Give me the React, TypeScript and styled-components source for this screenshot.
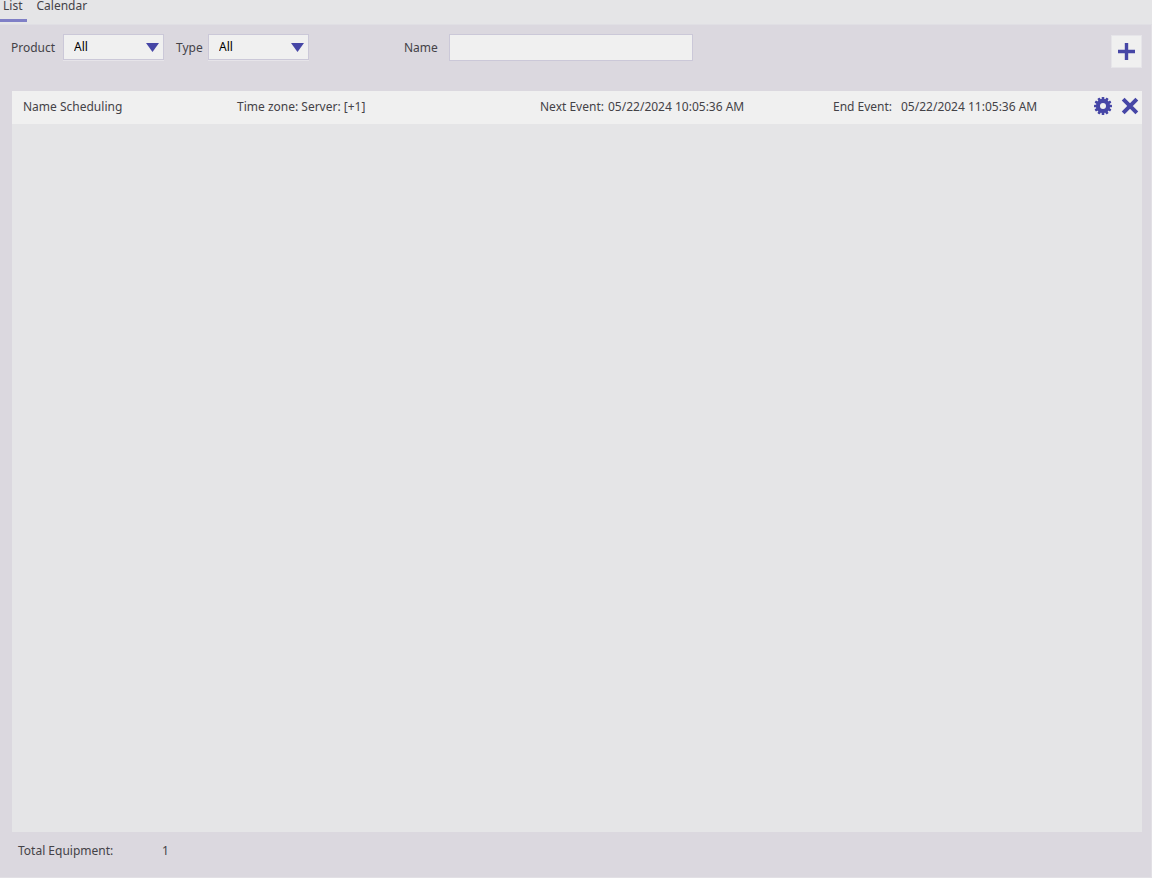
import React, { useState } from "react";
import styled, { createGlobalStyle } from "styled-components";

const ink = "#444247";
const accent = "#4646a6";
const surface = "#f0f0f0";

const GlobalStyle = createGlobalStyle`
  *, *::before, *::after { box-sizing: border-box; }
  body {
    margin: 0;
    background: #e5e5e7;
    color: ${ink};
    font-family: "Noto Sans", "Open Sans", sans-serif;
    font-size: 12px;
    line-height: 16px;
  }
  button, input, select { font: inherit; color: inherit; }
`;

const Page = styled.div`
  display: flex;
  flex-direction: column;
  min-height: 100vh;
`;

const Tabs = styled.nav`
  display: flex;
  gap: 6px;
  height: 25px;
  border-bottom: 1px solid #e0dfe4;
`;

const Tab = styled.button<{ $active: boolean }>`
  display: flex;
  align-items: flex-start;
  height: 22px;
  padding: 0 5px 0 3px;
  border: 0;
  border-bottom: 3px solid ${(p) => (p.$active ? "#7f7fc6" : "transparent")};
  background: none;
  line-height: 12px;
  cursor: pointer;
`;

const Panel = styled.main`
  flex: 1;
  display: flex;
  flex-direction: column;
  padding: 9px 9px 0 11px;
  background: #dbd8df;
  border-right: 1px solid #e2e0e5;
  border-bottom: 1px solid #e2e0e5;
`;

const FilterBar = styled.form`
  display: flex;
  align-items: flex-start;
  height: 57px;
`;

const Field = styled.div<{ $labelWidth: number; $after: number }>`
  display: grid;
  grid-template-columns: ${(p) => p.$labelWidth}px auto;
  align-items: center;
  margin-right: ${(p) => p.$after}px;
`;

const SelectBox = styled.div`
  position: relative;
  width: 101px;
  height: 27px;
  border-bottom: 1px solid #e6e4e9;
`;

const Select = styled.select`
  appearance: none;
  display: block;
  width: 100%;
  height: 26px;
  padding: 0 24px 0 10px;
  border: 1px solid #cbc8d8;
  border-radius: 0;
  background: ${surface};
  color: #000;
`;

const Arrow = styled.svg`
  position: absolute;
  top: 9px;
  right: 5px;
  width: 13px;
  height: 9px;
  fill: ${accent};
  pointer-events: none;
`;

const TextInput = styled.input`
  width: 244px;
  height: 27px;
  padding: 0 8px;
  border: 1px solid #cbc8d8;
  border-radius: 0;
  background: ${surface};
`;

const AddButton = styled.button`
  display: grid;
  place-items: center;
  width: 31px;
  height: 33px;
  margin: 1px 0 0 auto;
  padding: 0 1px 1px 0;
  border: 1px solid #e6e5e9;
  background: ${surface};
  cursor: pointer;
`;

const List = styled.ul`
  flex: 1;
  margin: 0 0 0 1px;
  padding: 0;
  list-style: none;
  background: #e5e5e7;
`;

const Row = styled.li`
  display: grid;
  grid-template-columns: 214fr 303fr 293fr 261fr auto;
  align-items: center;
  height: 33px;
  padding: 0 3px 2px 11px;
  background: ${surface};
  white-space: nowrap;
`;

const Event = styled.div`
  display: flex;
`;

const EventLabel = styled.span`
  width: 68px;
`;

const Actions = styled.div`
  display: flex;
  gap: 9px;
`;

const IconButton = styled.button`
  display: grid;
  place-items: start center;
  width: 18px;
  height: 19px;
  padding: 0;
  border: 0;
  background: none;
  cursor: pointer;
`;

const Footer = styled.footer`
  display: grid;
  grid-template-columns: 144px auto;
  height: 45px;
  padding: 11px 0 0 7px;
`;

const GearIcon = () => (
  <svg width="18" height="18" viewBox="-9 -9 18 18" aria-hidden="true">
    <g fill={accent}>
      {[0, 30, 60, 90, 120, 150].map((angle) => (
        <rect key={angle} x="-1.3" y="-9" width="2.6" height="18" rx="0.6" transform={`rotate(${angle})`} />
      ))}
      <circle r="7.2" />
    </g>
    <circle r="3" fill={surface} />
  </svg>
);

const CloseIcon = () => (
  <svg width="18" height="18" viewBox="0 0 18 18" aria-hidden="true">
    <path d="M3.6 3.6 14.4 14.4M14.4 3.6 3.6 14.4" stroke={accent} strokeWidth="4" strokeLinecap="square" strokeLinejoin="round" />
  </svg>
);

const PlusIcon = () => (
  <svg width="17" height="17" viewBox="0 0 17 17" aria-hidden="true">
    <path d="M8.5 0V17M0 8.5H17" stroke={accent} strokeWidth="3.4" />
  </svg>
);

const Filter = ({ id, label, labelWidth, after }: { id: string; label: string; labelWidth: number; after: number }) => (
  <Field $labelWidth={labelWidth} $after={after}>
    <label htmlFor={id}>{label}</label>
    <SelectBox>
      <Select id={id} defaultValue="All">
        <option>All</option>
      </Select>
      <Arrow viewBox="0 0 13 9" aria-hidden="true">
        <path d="M0 0H13L6.5 9Z" />
      </Arrow>
    </SelectBox>
  </Field>
);

const schedules = [
  {
    name: "Name Scheduling",
    zone: "Time zone: Server: [+1]",
    next: "05/22/2024 10:05:36 AM",
    end: "05/22/2024 11:05:36 AM",
  },
];

export default function App() {
  const [tab, setTab] = useState("List");
  return (
    <Page>
      <GlobalStyle />
      <Tabs>
        {["List", "Calendar"].map((name) => (
          <Tab key={name} type="button" $active={tab === name} onClick={() => setTab(name)}>
            {name}
          </Tab>
        ))}
      </Tabs>
      <Panel>
        <FilterBar onSubmit={(e) => e.preventDefault()}>
          <Filter id="product" label="Product" labelWidth={52} after={12} />
          <Filter id="type" label="Type" labelWidth={32} after={95} />
          <Field $labelWidth={45} $after={8}>
            <label htmlFor="name">Name</label>
            <TextInput id="name" type="text" />
          </Field>
          <AddButton type="button" aria-label="Add schedule">
            <PlusIcon />
          </AddButton>
        </FilterBar>
        <List>
          {schedules.map((s) => (
            <Row key={s.name}>
              <span>{s.name}</span>
              <span>{s.zone}</span>
              <Event>
                <EventLabel>Next Event:</EventLabel>
                <span>{s.next}</span>
              </Event>
              <Event>
                <EventLabel>End Event:</EventLabel>
                <span>{s.end}</span>
              </Event>
              <Actions>
                <IconButton type="button" aria-label="Settings">
                  <GearIcon />
                </IconButton>
                <IconButton type="button" aria-label="Delete">
                  <CloseIcon />
                </IconButton>
              </Actions>
            </Row>
          ))}
        </List>
        <Footer>
          <span>Total Equipment:</span>
          <span>{schedules.length}</span>
        </Footer>
      </Panel>
    </Page>
  );
}
